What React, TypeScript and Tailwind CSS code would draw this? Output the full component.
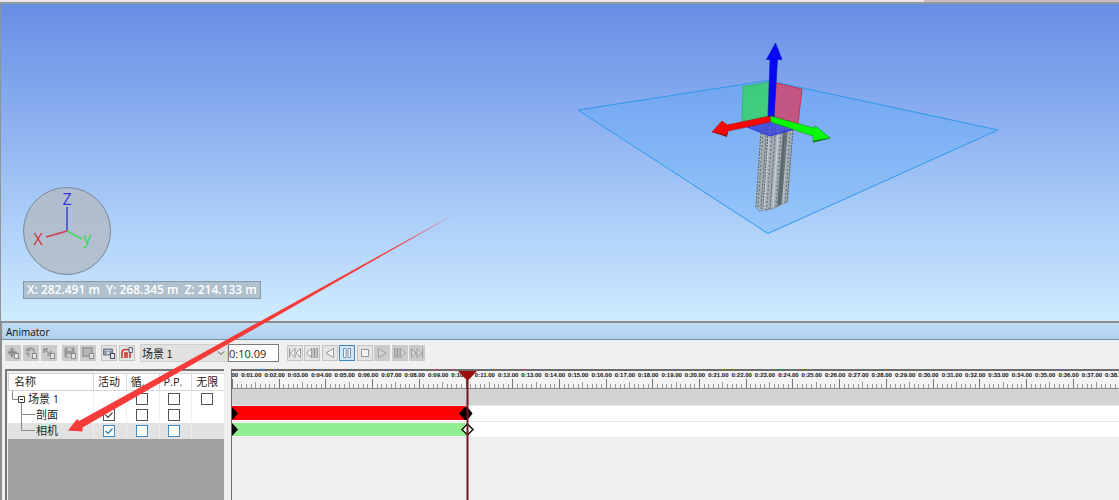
import type { ReactNode } from "react";

const SECOND = 23.35;
const RULER_SECONDS = 39;

const formatSeconds = (value: number) =>
  `${Math.floor(value / 60)}:${String(value % 60).padStart(2, "0")}.00`;

type ToolState = "disabled" | "normal" | "active";

function ToolButton({
  label,
  state = "disabled",
  children,
}: {
  label: string;
  state?: ToolState;
  children: ReactNode;
}) {
  const tone = {
    disabled: "border-[#cbcbcb] bg-[#cbcbcb]",
    normal: "border-[#c4c4c4] bg-[#e4e4e4]",
    active: "border-[#3f86bd] bg-[#cfe6f8]",
  }[state];

  return (
    <button
      type="button"
      aria-label={label}
      disabled={state === "disabled"}
      className={`flex h-4 w-4 shrink-0 items-center justify-center border ${tone}`}
    >
      <svg viewBox="0 0 16 16" className="h-4 w-4 shrink-0" fill="none">
        {children}
      </svg>
    </button>
  );
}

function Badge({ color = "#8c8c8c" }: { color?: string }) {
  return <rect x="9.5" y="8.5" width="4" height="5" fill="#e4e4e4" stroke={color} />;
}

function Transport() {
  const shape = { fill: "#f6f6f6", stroke: "#8c8c8c", strokeWidth: 0.9 };
  const muted = { fill: "#d5d5d5", stroke: "#999", strokeWidth: 0.9 };

  return (
    <div className="ml-2 flex w-[138px] shrink-0 justify-between">
      <ToolButton label="Rewind" state="normal">
        <path d="M2.500 3.500v9M8 3.500 3.500 8 8 12.500zM13.500 3.500 9 8l4.500 4.500z" {...shape} />
      </ToolButton>
      <ToolButton label="Step back" state="normal">
        <path d="M7.500 3.500 2.500 8l5 4.500zM9 3.500h1.500v9H9zM12 3.500h1.500v9H12z" {...shape} />
      </ToolButton>
      <ToolButton label="Reverse play" state="normal">
        <path d="M11.500 3.500 4 8l7.500 4.500z" {...shape} />
      </ToolButton>
      <ToolButton label="Pause" state="active">
        <path d="M4.500 3.500H7v9H4.500zM9 3.500h2.500v9H9z" fill="#fff" stroke="#7893ad" />
      </ToolButton>
      <ToolButton label="Stop" state="normal">
        <path d="M4.500 4.500h7v7h-7z" {...shape} />
      </ToolButton>
      <ToolButton label="Play">
        <path d="M4.500 3.500 12 8l-7.500 4.500z" {...muted} />
      </ToolButton>
      <ToolButton label="Step forward">
        <path d="M8.500 3.500l5 4.500-5 4.500zM5.500 3.500H7v9H5.500zM2.500 3.500H4v9H2.500z" {...muted} />
      </ToolButton>
      <ToolButton label="Fast forward">
        <path d="M2.500 3.500 7 8l-4.500 4.500zM8 3.500 12.500 8 8 12.500zM13.500 3.500v9" {...muted} />
      </ToolButton>
    </div>
  );
}

function Toolbar() {
  return (
    <div className="flex h-[29px] items-center pb-[3px] pl-[3px]">
      <div className="flex gap-[2px]">
        <ToolButton label="Translate">
          <path d="M7 2 12 7.500 7 13 2 7.500z" fill="#a9a9a9" />
          <path d="M7 3v9M3 7.500h9" stroke="#8a8a8a" strokeWidth="1.500" />
          <Badge />
        </ToolButton>
        <ToolButton label="Rotate">
          <path d="M2.500 5.500h4v-3M3 5.500C5 2.500 10 2.500 11 6v2M2.500 8.500h3v3" stroke="#939393" strokeWidth="1.500" />
          <Badge />
        </ToolButton>
        <ToolButton label="Scale">
          <path d="M3 4l6 5M3 8V4h4M6 10h4V6" stroke="#939393" strokeWidth="1.500" />
          <Badge />
        </ToolButton>
      </div>
      <div className="ml-[5px] flex gap-[2px]">
        <ToolButton label="Color">
          <path d="M3 3h9v9H3z" fill="#999" stroke="#929292" />
          <path d="M5.500 3h4v3h-4zM5 9h4v3H5z" fill="#c9c9c9" />
          <Badge />
        </ToolButton>
        <ToolButton label="Transparency">
          <path d="M3 3h9v8H3z" fill="#bcbcbc" stroke="#929292" strokeWidth="1.500" />
          <path d="M5 7h5" stroke="#a4a4a4" />
          <Badge />
        </ToolButton>
      </div>
      <div className="ml-[5px] flex gap-[2px]">
        <ToolButton label="Capture keyframe" state="normal">
          <path d="M2.500 4h9v6h-9z" fill="#8d96a8" stroke="#6d768a" />
          <path d="M4 5.500h6" stroke="#c4ccdb" />
          <circle cx="7" cy="8" r="1.500" fill="#d9e0ec" />
          <Badge color="#454d60" />
        </ToolButton>
        <ToolButton label="Toggle snapping" state="normal">
          <path
            d="M3 13V7.500a3 3 0 0 1 3-3h2a3 3 0 0 1 3 3V13M6 13V8h2v5"
            stroke="#d0382c"
            strokeWidth="1.600"
          />
          <path d="M10 2.500h3.500v5H10z" fill="#dfe5ef" stroke="#59637a" />
        </ToolButton>
      </div>

      <div className="relative ml-[5px] h-[18px] w-[88px] shrink-0">
        <select
          aria-label="场景"
          className="block h-[18px] w-full appearance-none border border-[#cfcfcf] bg-[#e1e1e1] pl-px font-['Noto_Sans_CJK_SC',sans-serif] text-[11px] text-[#222]"
        >
          <option>场景 1</option>
        </select>
        <svg viewBox="0 0 8 8" className="pointer-events-none absolute top-[5px] right-[3px] h-2 w-2" fill="none">
          <path d="M1 2.500l3 3 3-3" stroke="#555" />
        </svg>
      </div>
      <input
        aria-label="Time position"
        defaultValue="0:10.09"
        className="h-[18px] w-[51px] shrink-0 border border-[#7b7b7b] bg-white text-[11px] text-[#222]"
      />
      <Transport />
    </div>
  );
}

type Row = { name: string; depth: number; checks: (boolean | null)[]; selected?: boolean };

const rows: Row[] = [
  { name: "场景 1", depth: 0, checks: [null, false, false, false] },
  { name: "剖面", depth: 1, checks: [true, false, false, null] },
  { name: "相机", depth: 1, checks: [true, false, false, null], selected: true },
];

const columns = ["活动", "循.", "P.P.", "无限"];

function TreeLines({ row }: { row: Row }) {
  return (
    <svg viewBox="0 0 28 16" className="h-4 w-7 shrink-0" fill="none" stroke="#8a8a8a">
      {row.depth === 0 ? (
        <>
          <path d="M4.500 0v8.500H10" />
          <path d="M10.500 5.500h6v6h-6z" stroke="#444" />
          <path d="M12 8.500h3" stroke="#222" />
          <path d="M13.500 12v4" />
        </>
      ) : (
        <path d={row.selected ? "M13.500 0v7.500H27" : "M13.500 0v16M13.500 7.500H27"} />
      )}
    </svg>
  );
}

function CheckBox({ label, checked, selected }: { label: string; checked: boolean; selected?: boolean }) {
  return (
    <span className="relative mx-auto block h-3 w-3">
      <input
        type="checkbox"
        aria-label={label}
        defaultChecked={checked}
        className={`peer block h-3 w-3 appearance-none border bg-white ${selected ? "border-[#3c8ac8]" : "border-[#555]"}`}
      />
      <svg
        viewBox="0 0 12 12"
        className="pointer-events-none absolute inset-0 hidden h-3 w-3 peer-checked:block"
        fill="none"
      >
        <path d="M2.500 6l2.500 2.500 4.500-5" stroke={selected ? "#2874b8" : "#444"} strokeWidth="1.200" />
      </svg>
    </span>
  );
}

function SceneTree() {
  return (
    <div className="flex w-[219px] shrink-0 flex-col border-t-2 border-l-2 border-[#777] pt-[2px] pl-px">
      <table className="w-full table-fixed border-separate border-spacing-0 bg-white text-[11px] text-[#1c1c1c]">
        <colgroup>
          <col className="w-[85px]" />
          <col />
          <col />
          <col />
          <col />
        </colgroup>
        <thead>
          <tr className="h-[18px] leading-4">
            <th className="border-y border-l border-[#d0d0d0] p-0 pl-[5px] text-left font-normal">名称</th>
            {columns.map((column) => (
              <th
                key={column}
                className="border-y border-l border-[#d8d8d8] p-0 pl-1 text-left font-normal whitespace-nowrap"
              >
                {column}
              </th>
            ))}
          </tr>
        </thead>
        <tbody>
          {rows.map((row) => (
            <tr key={row.name} className={`h-4 ${row.selected ? "bg-[#e2e2e2]" : ""}`}>
              <td className="p-0">
                <div className="flex h-4 items-center leading-4">
                  <TreeLines row={row} />
                  <span className={`whitespace-nowrap ${row.depth === 0 ? "-ml-2" : ""}`}>{row.name}</span>
                </div>
              </td>
              {row.checks.map((checked, index) => (
                <td key={columns[index]} className="border-l border-[#eee] p-0 pr-[2px]">
                  {checked !== null && (
                    <CheckBox label={`${row.name} ${columns[index]}`} checked={checked} selected={row.selected} />
                  )}
                </td>
              ))}
            </tr>
          ))}
        </tbody>
      </table>
      <div className="flex-1 bg-[#a0a0a0]" />
    </div>
  );
}

function Ruler() {
  const seconds = Array.from({ length: RULER_SECONDS }, (_, i) => i);
  const ticks = Array.from({ length: RULER_SECONDS * 5 }, (_, i) => i);

  return (
    <svg className="block h-[18px] w-full bg-[#f3f3f3]">
      {seconds.map((second) => (
        <text
          key={second}
          x={second * SECOND - 4}
          y="6"
          textAnchor="middle"
          className="fill-[#111] font-['Liberation_Sans',sans-serif] text-[6px] font-bold"
        >
          {formatSeconds(second)}
        </text>
      ))}
      {ticks.map((tick) => {
        const x = Math.round((tick * SECOND) / 5) + 0.5;
        const height = tick % 10 === 0 ? 9 : tick % 5 === 0 ? 6 : 4;
        return <line key={tick} x1={x} x2={x} y1={17 - height} y2="17" stroke={tick % 10 === 0 ? "#777" : "#999"} />;
      })}
      <line x1="0" x2="100%" y1="17.500" y2="17.500" stroke="#888" />
    </svg>
  );
}

function Timeline() {
  return (
    <div className="relative min-w-0 flex-1 overflow-hidden border-t-2 border-l border-[#6c6c6c] bg-[#efefef]">
      <Ruler />
      <div className="h-4 bg-[#d3d3d3]" />
      <div className="h-[17px] border-y border-[#e6e6e6] bg-white">
        <div className="h-[14px] w-[234px] bg-[#fe0000]" />
      </div>
      <div className="h-4 border-b border-[#e6e6e6] bg-white pt-px">
        <div className="h-[13px] w-[234px] bg-[#90ee90]" />
      </div>
      <svg className="absolute inset-0 h-full w-full">
        <path d="M0 36l6 6.500-6 6.500zM0 52l6 6.500-6 6.500z" fill="#000" />
        <path d="M227 42.500l6-6.500h2.500l5 6.500-5 6.500H233z" fill="#000" />
        <path d="M230 58.500l5.500-5.500 5.500 5.500-5.500 5.500z" fill="#fff" stroke="#111" strokeWidth="1.500" />
        <path d="M235.500 9v500" stroke="#76161c" strokeWidth="2" />
        <path d="M226 0h19l-9.500 10z" fill="#9c0c10" />
      </svg>
    </div>
  );
}

function SceneDrawing() {
  return (
    <svg width="1119" height="317" viewBox="0 4 1119 317" className="absolute top-0 -left-px" fill="none">
      <defs>
        <pattern id="facade" width="9" height="4" patternUnits="userSpaceOnUse" patternTransform="skewX(-4)">
          <rect width="9" height="4" fill="#a5b0b9" />
          <path d="M1.500 0v3M7.500 1v2" stroke="#5c666c" strokeDasharray="2 1" />
          <path d="M4.500 0v4" stroke="#cbd3d8" strokeWidth="1.500" />
          <path d="M0 3.500h3M5 1.500h2" stroke="#78848b" strokeWidth="0.600" />
        </pattern>
      </defs>
      <path d="M578 110 768 80.500 998 130 768 233.500z" fill="#49a8ff" fillOpacity="0.240" stroke="#2e98ea" />
      <path d="M761 127l32-1-5 76-10 5-13 4-9-4z" fill="url(#facade)" />
      <path d="M783 130l5 0-6 74-5 2z" fill="#48565e" fillOpacity="0.700" />
      <path d="M761 130l-5 76M768 133l-5 76M793 130l-6 72" stroke="#59646a" strokeDasharray="2 1" />
      <path d="M755 206l4 5 15-3 14-7" stroke="#727d83" strokeDasharray="2 1" />
      <path d="M743 86.500l26-4-1 35-26 5z" fill="#38cf72" fillOpacity="0.900" stroke="#2ebc67" />
      <path d="M776 83l26 6-4 35-25-8z" fill="#c94e78" fillOpacity="0.920" stroke="#cf3158" />
      <path d="M747 127l23-8 25 10-25 7z" fill="#3843dc" fillOpacity="0.820" stroke="#293bd2" />
      <path d="M768 118l2-58.500h-3.500l9-16.500 6.500 16.500h-4.500L774 118z" fill="#0808f6" stroke="#0710bd" strokeWidth="0.600" />
      <path d="M813 142.500l17-4-3-2-14 2z" fill="#096412" />
      <path
        d="M770 116l44 12 1-2.500L830 138l-17 3v-5l-42-14z"
        fill="#08fa08"
        stroke="#0a990e"
        strokeWidth="0.600"
      />
      <path d="M712 132l15 5 1-6z" fill="#951219" />
      <path
        d="M770 116l-43 9-5-4-10 11 15 3 1-4 42-9z"
        fill="#fa0707"
        stroke="#a60d12"
        strokeWidth="0.600"
      />
    </svg>
  );
}

function AxisCompass() {
  return (
    <svg viewBox="0 0 90 90" className="h-[90px] w-[90px]" fill="none">
      <circle cx="45" cy="45" r="43.500" fill="#b2bac4" fillOpacity="0.800" stroke="#768799" />
      <path d="M45 45V21" stroke="#3e3ed4" strokeWidth="1.500" />
      <path d="M45 45l-21 6" stroke="#d13a49" strokeWidth="1.500" />
      <path d="M45 45l15 8" stroke="#42d75a" strokeWidth="1.500" />
      <g className="font-['Open_Sans',sans-serif] text-base" textAnchor="middle">
        <text x="45" y="19" fill="#3737d2">Z</text>
        <text x="16" y="59" fill="#d23243">X</text>
        <text x="65" y="58" fill="#3bd755">y</text>
      </g>
    </svg>
  );
}

function Viewport() {
  return (
    <main className="relative flex h-[317px] shrink-0 flex-col items-start justify-end overflow-hidden border-l border-[#8f969a] bg-linear-to-b from-[#688de5] to-[#cfecff] pb-[22px] pl-[21px]">
      <SceneDrawing />
      <AxisCompass />
      <output className="mt-[5px] ml-px flex h-[18px] items-center gap-[6px] border border-[#8499aa] bg-[#b0c0cd] px-[3px] font-['Open_Sans',sans-serif] text-xs leading-4 font-semibold text-white">
        <span>X: 282.491 m</span>
        <span>Y: 268.345 m</span>
        <span>Z: 214.133 m</span>
      </output>
    </main>
  );
}

export default function App() {
  return (
    <div className="relative flex min-h-screen flex-col overflow-hidden bg-[#f0f0f0] font-['Open_Sans','Noto_Sans_CJK_SC',sans-serif]">
      <div className="flex h-1 shrink-0 justify-end border-b-2 border-[#8e9b9b] bg-[#ece6ea]">
        <div className="w-[195px] bg-[#c6b9c0]" />
      </div>
      <Viewport />
      <section className="flex flex-1 flex-col border-t-2 border-l-2 border-[#8c8c8c]">
        <h2 className="h-[17px] border-b border-[#7890a5] bg-linear-to-b from-[#c0dcf4] to-[#afd1ef] pl-1 text-[10px] leading-[18px] text-[#111]">
          Animator
        </h2>
        <Toolbar />
        <div className="flex flex-1 gap-[7px] pl-[3px]">
          <SceneTree />
          <Timeline />
        </div>
      </section>
      <svg width="1119" height="500" className="pointer-events-none absolute top-0 left-0">
        <path d="M454 214.500 79 421l-2-2-9 11.500 14.500 1V427.500z" fill="#f73a3a" />
      </svg>
    </div>
  );
}
